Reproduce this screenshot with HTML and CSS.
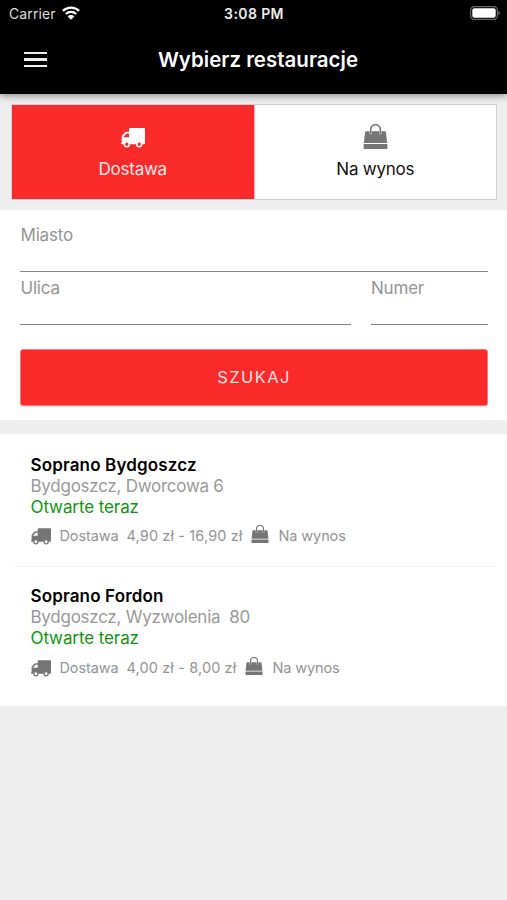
FILE: index.html
```html
<!DOCTYPE html>
<html lang="pl">
<head>
<meta charset="utf-8">
<title>Wybierz restauracje</title>
<link rel="stylesheet" href="styles.css">
</head>
<body>
<svg class="defs" width="0" height="0" aria-hidden="true">
  <symbol id="truck" viewBox="0 0 24 20">
    <path fill-rule="evenodd" d="M9 0H23Q24 0 24 1V15Q24 16.3 22.6 16.3H21.4A3.2 3.2 0 0 1 15 16.3H9A3.2 3.2 0 0 1 2.6 16.3H1Q0 16.3 0 15.5Q0 14.8 .7 14.6V9Q.7 8 1.3 7.3L4 4.4Q4.6 3.8 5.5 3.8H8V1Q8 0 9 0ZM8 5.5H5.6L2.6 8.7V9.2H8ZM5.8 14.6A1.7 1.7 0 1 0 5.8 18A1.7 1.7 0 1 0 5.8 14.6ZM18.2 14.6A1.7 1.7 0 1 0 18.2 18A1.7 1.7 0 1 0 18.2 14.6Z"/>
  </symbol>
  <symbol id="bag" viewBox="0 0 24 25">
    <path d="M.3 19 1.6 8Q1.7 7.3 2.5 7.3H6V9.6A1.2 1.2 0 1 0 8.4 9.6V7.3H15.6V9.6A1.2 1.2 0 1 0 18 9.6V7.3H21.5Q22.3 7.3 22.4 8L23.7 19ZM.2 20H23.8L24 24Q24 25 23 25H1Q0 25 0 24Z"/>
    <path d="M7.2 10V5.3A4.8 4.6 0 0 1 16.8 5.3V10" fill="none" stroke="currentColor" stroke-width="1.6" stroke-linecap="round"/>
  </symbol>
</svg>

<header class="header">
  <div class="status">
    <div class="carrier">Carrier
      <svg class="wifi" viewBox="0 0 18 14"><g fill="none" stroke="currentColor" stroke-width="2.3"><path d="M.9 4.9A11.7 11.7 0 0 1 17.1 4.9"/><path d="M3.8 8A7.4 7.4 0 0 1 14.2 8"/></g><path d="M9 13.8 5.6 10.4A4.8 4.8 0 0 1 12.4 10.4Z"/></svg>
    </div>
    <div class="clock">3:08 PM</div>
    <svg class="battery" viewBox="0 0 30 14"><rect x=".6" y=".6" width="26.8" height="12.8" rx="3.6" fill="none" stroke="#666" stroke-width="1.2"/><rect x="2.3" y="2.3" width="23.4" height="9.4" rx="2" fill="#fff"/><path d="M28.4 4.8Q30 5.5 30 7Q30 8.5 28.4 9.2Z" fill="#666"/></svg>
  </div>
  <div class="bar">
    <div class="menu"><i></i><i></i><i></i></div>
    <h1>Wybierz restauracje</h1>
  </div>
</header>

<nav class="tabs">
  <div class="tab active"><svg class="tab-truck"><use href="#truck"/></svg><span class="t-delivery">Dostawa</span></div>
  <div class="tab"><svg class="tab-bag"><use href="#bag"/></svg><span class="t-pickup">Na wynos</span></div>
</nav>

<section class="search">
  <div class="field">Miasto</div>
  <div class="row">
    <div class="field street">Ulica</div>
    <div class="field number">Numer</div>
  </div>
  <div class="button">SZUKAJ</div>
</section>

<main class="list">
  <article class="place">
    <h2>Soprano Bydgoszcz</h2>
    <p class="address">Bydgoszcz, Dworcowa 6</p>
    <p class="open">Otwarte teraz</p>
    <div class="info"><svg class="truck"><use href="#truck"/></svg><span class="label">Dostawa</span><span class="price">4,90 zł - 16,90 zł</span><svg class="bag"><use href="#bag"/></svg><span class="pickup">Na wynos</span></div>
  </article>
  <article class="place">
    <h2>Soprano Fordon</h2>
    <p class="address">Bydgoszcz, Wyzwolenia&nbsp; 80</p>
    <p class="open">Otwarte teraz</p>
    <div class="info"><svg class="truck"><use href="#truck"/></svg><span class="label">Dostawa</span><span class="price">4,00 zł - 8,00 zł</span><svg class="bag"><use href="#bag"/></svg><span class="pickup">Na wynos</span></div>
  </article>
</main>
</body>
</html>
```
FILE: styles.css
```css
* { box-sizing: border-box; }
body { margin: 0; height: 900px; background: #eee; font-family: Inter, "Liberation Sans", sans-serif; color: #111; overflow: hidden; }
h1, h2, p { margin: 0; }
svg { fill: currentColor; flex: none; }
.defs { display: block; }

.header { height: 94px; background: #000; color: #fff; box-shadow: 0 2px 7px rgba(0, 0, 0, .4); }
.status { height: 28px; display: grid; grid-template-columns: 1fr auto 1fr; align-items: center; padding: 0 7px 0 9px; font-size: 14px; }
.carrier { display: flex; align-items: center; gap: 6px; color: #ddd; letter-spacing: .1px; margin-top: -1px; }
.wifi { width: 18px; height: 14px; color: #fff; margin-top: -1px; }
.clock { font-weight: 600; font-size: 14px; letter-spacing: .4px; color: #eee; margin: -2px 0 0 -1px; }
.battery { width: 30px; height: 14px; justify-self: end; margin-top: -2px; }
.bar { height: 64px; display: grid; grid-template-columns: 60px 1fr 60px; align-items: center; }
.menu { display: flex; flex-direction: column; gap: 4px; margin: -1px 0 0 24px; width: 23px; }
.menu i { height: 2.4px; background: #eee; }
h1 { text-align: center; font-size: 20.5px; font-weight: 600; line-height: 24px; margin-left: 9px; }

.tabs { display: flex; height: 96px; margin: 10px 10px 10px 11px; border: 1px solid #d2d2d2; background: #fff; }
.tab { flex: 1; display: flex; flex-direction: column; align-items: center; }
.active { background: #fa292a; color: #ffe9e9; border-right: 1px solid #ffabb0; }
.tab-truck { width: 24px; height: 20px; margin-top: 22.5px; color: #fff; }
.tab-bag { width: 25px; height: 25px; margin-top: 19px; color: #757575; }
.tab span { font-size: 17px; line-height: 22px; letter-spacing: -.25px; }
.t-delivery { margin-top: 10.5px; }
.t-pickup { margin-top: 9px; }

.search { height: 210px; background: #fff; padding: 14px 19px 0 20px; }
.field { height: 48px; border-bottom: 1.5px solid #858585; font-size: 17px; line-height: 22px; color: #949494; letter-spacing: -.2px; text-indent: .5px; }
.row { display: flex; gap: 20px; margin-top: 5px; }
.street { flex: 1; }
.number { width: 117px; text-indent: 0; }
.button { height: 57px; margin-top: 24px; background: #fa292a; color: #ffe3e3; border: 1px solid #f77; border-radius: 3px; box-shadow: 0 1px 2px rgba(0, 0, 0, .12); text-align: center; font-size: 16.5px; line-height: 54px; letter-spacing: 1.4px; }

.list { background: #fff; margin-top: 14px; height: 272px; padding: 0 10px 0 12px; }
.place { height: 132px; padding: 21px 0 0 18.5px; }
.place + .place { height: 140px; border-top: 1px solid #f7f7f7; padding-top: 19px; }
h2 { font-size: 17px; line-height: 21px; font-weight: 600; color: #000; letter-spacing: .15px; }
.address, .open { font-size: 17px; line-height: 21px; color: #999; letter-spacing: -.26px; }
.open { color: #109410; letter-spacing: -.1px; }
.info { display: flex; align-items: center; height: 20px; margin-top: 8px; font-size: 14.5px; color: #949494; }
.place:first-child .info { margin-top: 7px; }
.truck { width: 20px; height: 17px; color: #757575; margin-top: 2px; }
.bag { width: 18px; height: 18px; color: #757575; margin: -2px 9px 0; }
.label { margin: 0 8px 0 9px; letter-spacing: -.1px; }
.price { letter-spacing: .12px; }
.pickup { letter-spacing: -.1px; }
```
